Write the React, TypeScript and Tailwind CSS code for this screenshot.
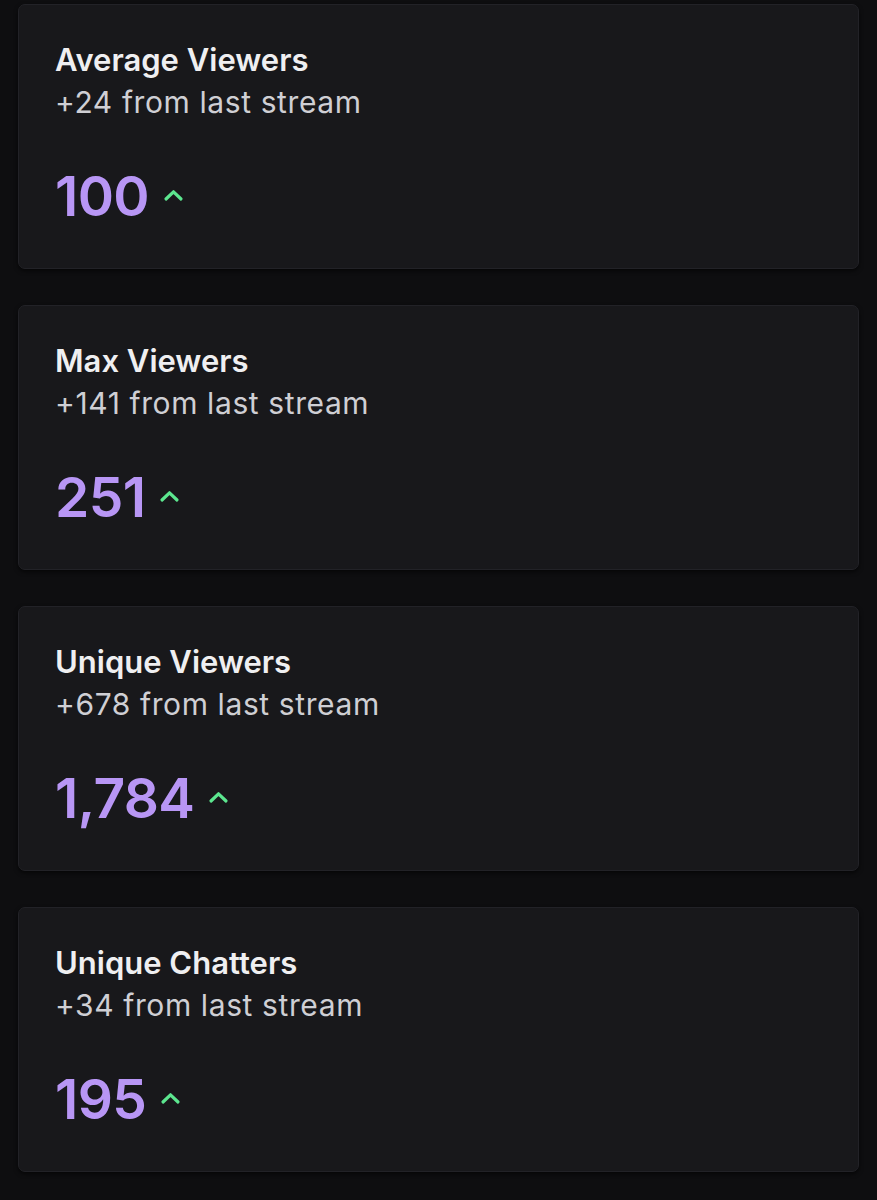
const stats = [
  { title: "Average Viewers", delta: "+24 from last stream", value: "100" },
  { title: "Max Viewers", delta: "+141 from last stream", value: "251" },
  { title: "Unique Viewers", delta: "+678 from last stream", value: "1,784" },
  { title: "Unique Chatters", delta: "+34 from last stream", value: "195" },
];

function Chevron() {
  return (
    <svg width="21" height="14" viewBox="0 0 21 14" className="ml-[14px] mb-[25px]">
      <path d="M3 11 L10.5 3.8 L18 11" fill="none" stroke="#5ce68f" strokeWidth="3.2" strokeLinecap="round" strokeLinejoin="round" />
    </svg>
  );
}

function StatCard({ title, delta, value }: { title: string; delta: string; value: string }) {
  return (
    <div className="h-[265px] rounded-[7px] bg-[#18181b] border border-[#222227] shadow-[0_2px_4px_rgba(0,0,0,0.6)] px-[36px] pt-[34px]">
      <div className="text-[31px] leading-[42px] font-semibold text-[#efeff1]">{title}</div>
      <div className="text-[30px] leading-[42px] tracking-[0.6px] text-[#cfcfd4]">{delta}</div>
      <div className="mt-[42px] flex items-end">
        <span className="text-[55px] leading-[62px] font-semibold text-[#b896f5] tracking-[-0.6px]">{value}</span>
        <Chevron />
      </div>
    </div>
  );
}

export default function App() {
  return (
    <div className="min-h-[1200px] bg-[#0e0e10] pt-[4px] pl-[18px] pr-[18px] flex flex-col gap-[36px]" style={{ fontFamily: "Inter, 'Noto Sans', sans-serif" }}>
      {stats.map((s) => (
        <StatCard key={s.title} {...s} />
      ))}
    </div>
  );
}
